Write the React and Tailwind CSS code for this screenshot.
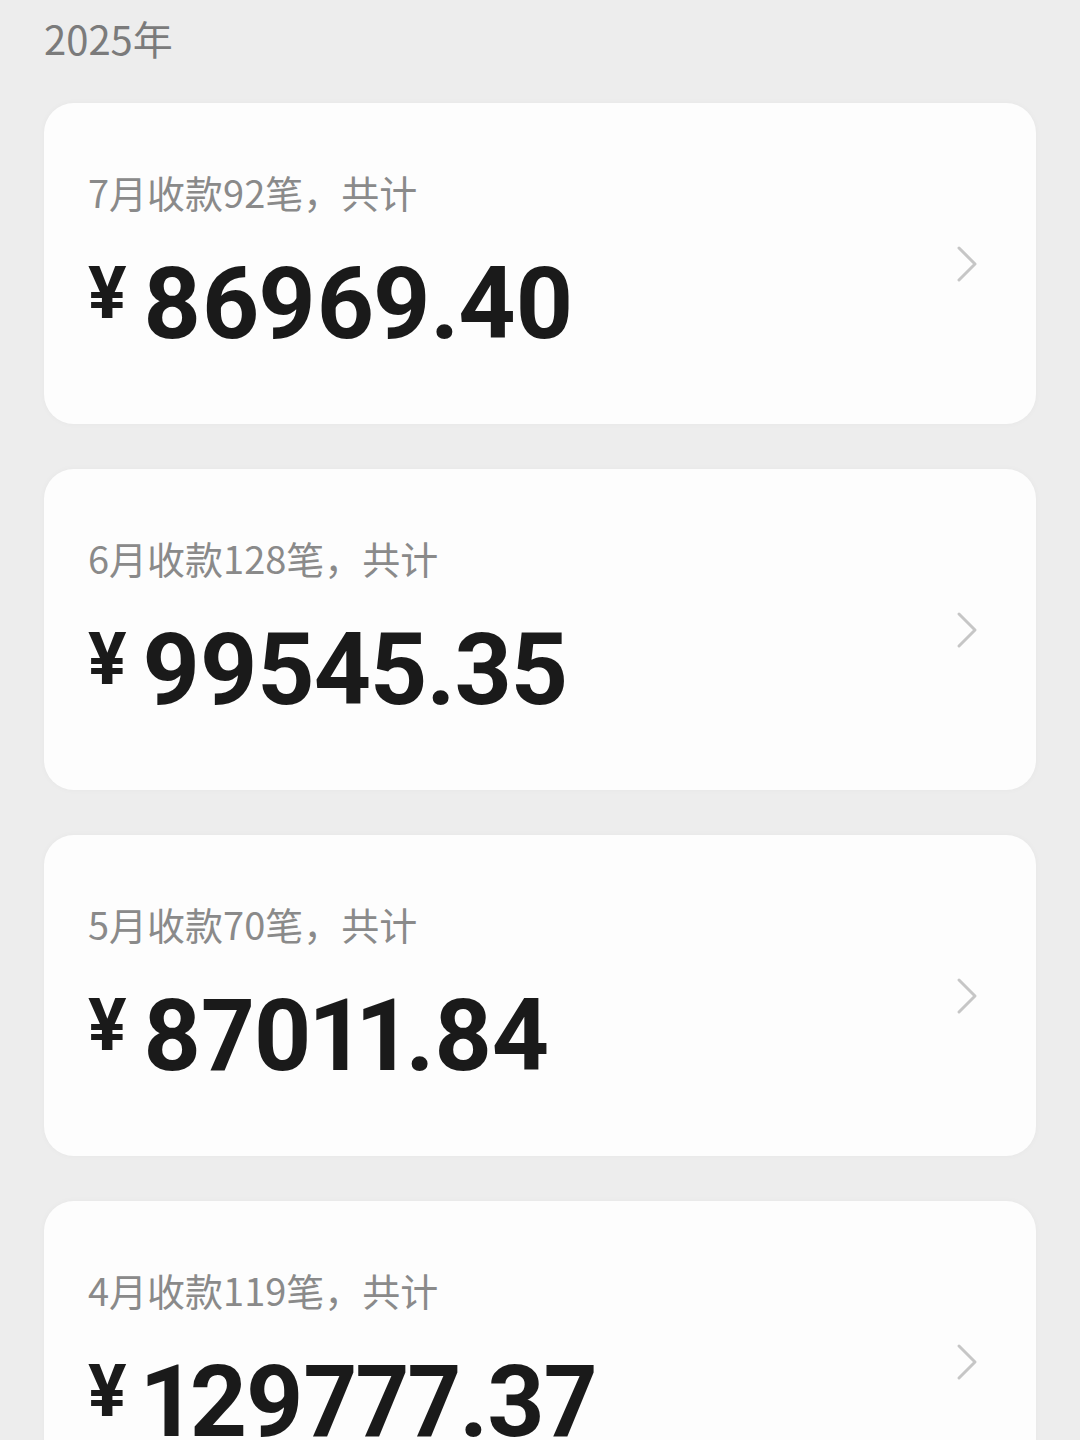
import React from "react";

const months = [
  { label: "7月收款92笔，共计", amount: "86969.40" },
  { label: "6月收款128笔，共计", amount: "99545.35" },
  { label: "5月收款70笔，共计", amount: "87011.84" },
  { label: "4月收款119笔，共计", amount: "129777.37" },
];

const Chevron = () => (
  <svg width="22" height="38" viewBox="0 0 22 38" fill="none">
    <path d="M3 3 L19 19 L3 35" stroke="#c6c6c6" strokeWidth="3" strokeLinecap="round" strokeLinejoin="round" />
  </svg>
);

const MonthCard = ({ label, amount }) => (
  <div className="flex h-[321px] justify-between rounded-[30px] bg-[#fdfdfd] pl-[44px] pr-[58px] shadow-[0_0_6px_rgba(0,0,0,0.03)]">
    <div className="flex flex-col pt-[70px]">
      <div className="text-[38px] leading-none text-[#8a8a8a] [font-family:'Noto_Sans_CJK_SC',sans-serif]">
        {label}
      </div>
      <div className="mt-[53px] flex items-start text-[#1a1a1a] [font-family:Roboto,'Noto_Sans',sans-serif]">
        <span className="-mt-[6px] text-[72px] font-bold leading-none">¥</span>
        <span className="ml-[16px] text-[100px] font-bold leading-[0.8] tracking-[-1px] proportional-nums">{amount}</span>
      </div>
    </div>
    <div className="self-center">
      <Chevron />
    </div>
  </div>
);

export default function App() {
  return (
    <div className="min-h-screen bg-[#ededed] px-[44px] pb-[40px]">
      <div className="pt-[18px] text-[40px] leading-none text-[#7b7b7b] [font-family:'Noto_Sans_CJK_SC',sans-serif]">
        2025年
      </div>
      <div className="mt-[45px] flex flex-col gap-[45px]">
        {months.map((m) => (
          <MonthCard key={m.label} label={m.label} amount={m.amount} />
        ))}
      </div>
    </div>
  );
}
